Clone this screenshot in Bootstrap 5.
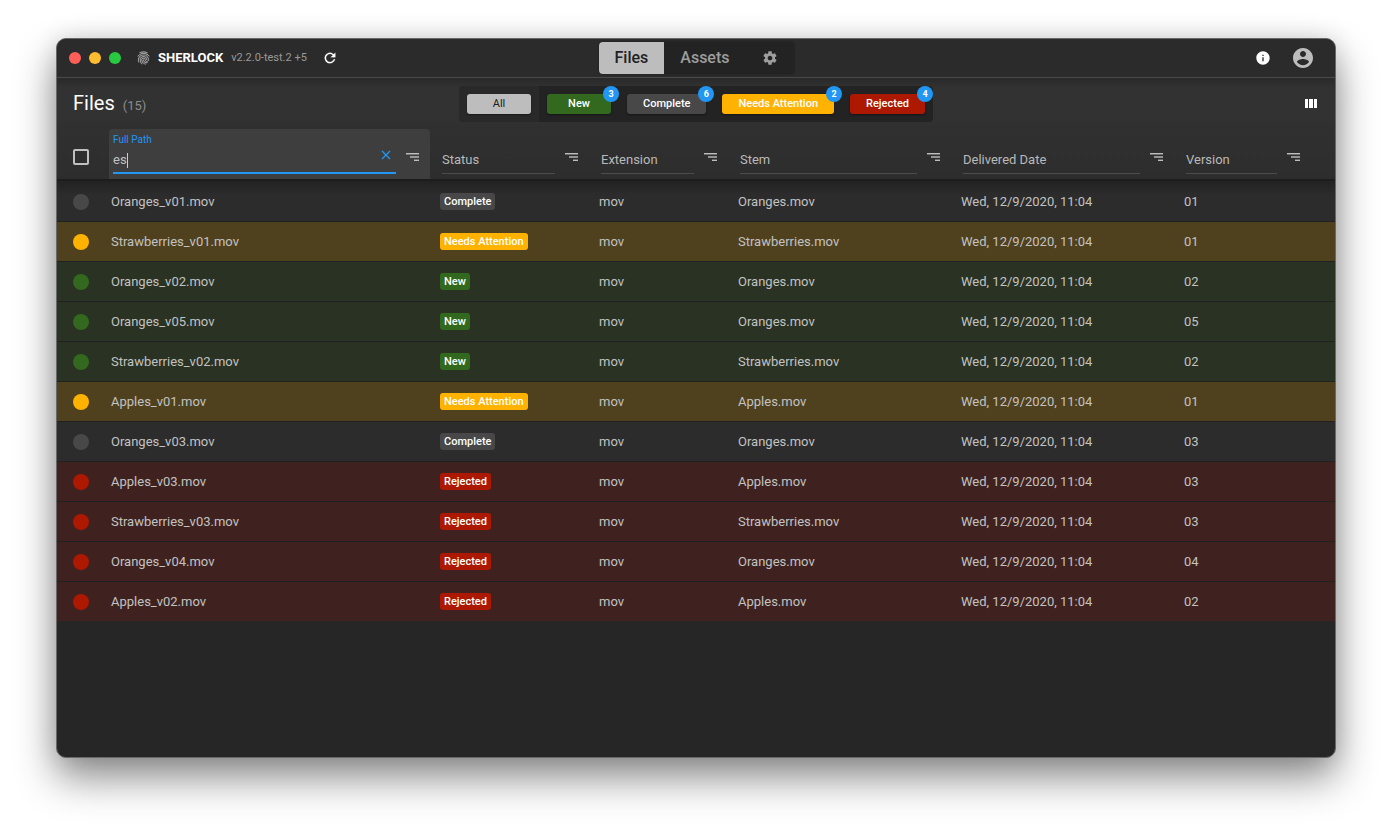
<!DOCTYPE html>
<html lang="en" data-bs-theme="dark">
<head>
<meta charset="utf-8">
<meta name="viewport" content="width=device-width, initial-scale=1">
<title>Sherlock – Files</title>
<link href="https://cdn.jsdelivr.net/npm/bootstrap@5.3.0/dist/css/bootstrap.min.css" rel="stylesheet">
<style>
  body { background: #fff; font-family: Roboto, "Liberation Sans", sans-serif; font-size: 13px; line-height: 20px; padding: 38px 56px 74px; }
  svg { display: block; fill: currentColor; }
  .app-window { background: #262626; color: #fff; border: 1px solid #686868; border-radius: 10px; box-shadow: 0 20px 40px rgba(0,0,0,.45), 0 0 24px rgba(0,0,0,.12); }
  .bar-grid { display: grid; grid-template-columns: 1fr auto 1fr; align-items: center; }
  .titlebar { height: 39px; background: #2b2b2b; border-bottom: 1px solid #4a4a4a; padding: 0 12px; }
  .toolbar { height: 51px; background: linear-gradient(#292929, #323232 10px, #323232 40px, #2f2f2f); padding: 0 16px; }
  .light { width: 12px; height: 12px; border-radius: 50%; }
  .bg-close { background: #ff5f57; } .bg-min { background: #febc2e; } .bg-max { background: #28c840; }
  .brand { font-size: 13px; font-weight: 700; }
  .version { font-size: 11px; font-weight: 400; color: #999; margin-right: 15px; }
  .actions { gap: 20px; }
  .plain { background: none; border: 0; padding: 0; color: inherit; }
  .soft { color: #bdbdbd; }
  .tabs { background: #232323; border-radius: 4px; overflow: hidden; box-shadow: 0 0 2px #1c1c1c; }
  .tabs button { height: 32px; padding: 0 16px; border: 0; background: none; color: #9e9e9e; font-size: 16px; font-weight: 500; }
  .tabs button.active { background: #bdbdbd; color: #212121; }
  .filters { background: #232323; border-radius: 4px; }
  .filters > div { padding: 8px; }
  .filters > div:first-child { background: #292929; border-radius: 4px 0 0 4px; }
  .chip { position: relative; display: block; height: 20px; min-width: 64px; border: 0; border-radius: 3px; padding: 0 16px; font-size: 11px; line-height: 19px; font-weight: 500; color: #fff; box-shadow: 0 1px 2px rgba(0,0,0,.4); }
  .count { position: absolute; top: -8px; right: -8px; width: 16px; height: 16px; border-radius: 50%; background: #2196f3; font-size: 9px; line-height: 16px; font-weight: 700; text-align: center; }
  .s-all { background: #bdbdbd; color: #212121; font-weight: 400; }
  .s-new { background: #33691e; } .s-complete { background: #484848; } .s-attention { background: #ffb300; } .s-rejected { background: #ad1900; }
  .title { font-size: 20px; font-weight: 400; line-height: 24px; }
  .total { font-size: 13px; color: #8c8c8c; }
  .files { table-layout: fixed; width: 100%; border-collapse: separate; border-spacing: 0; }
  .files th { background: linear-gradient(#303030, #2d2d2d); border-bottom: 2px solid #1d1d1d; padding: 0 8px 0 0; height: 52px; font-weight: 400; vertical-align: top; }
  .files td, .files .pick { padding: 0 0 0 2px; }
  .files td { height: 40px; border-bottom: 1px solid #212121; color: #c2c2c2; font-weight: 400; white-space: nowrap; }
  .files td:first-child, .files .pick { padding-left: 16px; }
  .files tr:last-child td { border-bottom: 0; height: 39px; }
  .files tr.complete td { background: #2c2c2c; } .files tr.attention td { background: #50411e; }
  .files tr.new td { background: #293223; } .files tr.rejected td { background: #3f221f; }
  .files tbody tr:first-child td { height: 41px; padding-top: 1px; background: linear-gradient(#222, #2c2c2c 14px); }
  .dot { width: 16px; height: 16px; border-radius: 50%; }
  .tag { display: block; width: fit-content; height: 17px; padding: 0 4px; border-radius: 3px; font-size: 11px; line-height: 17px; font-weight: 500; color: #fff; margin-bottom: 1px; }
  .check { appearance: none; display: block; width: 16px; height: 16px; margin: 20px 0 0; border: 2px solid #c0c0c0; border-radius: 2px; }
  .field { height: 50px; padding-left: 4px; border-radius: 4px 4px 0 0; }
  .field.on { background: #3e3e3e; }
  .entry { flex: 1 1 0; height: 45px; border-bottom: 1px solid #4c4c4c; min-width: 0; padding-top: 21px; }
  .on .entry { border-bottom: 2px solid #2196f3; padding-top: 0; }
  .entry label { font-size: 10px; line-height: 12px; padding-top: 5px; height: 21px; color: #2196f3; font-weight: 400; }
  .entry input { display: block; width: 100%; min-width: 0; height: 20px; padding: 0; border: 0; background: none; color: #c0c0c0; outline: 0; }
  .entry input::placeholder { color: #b9b9b9; opacity: 1; }
  .on .entry input { background: linear-gradient(#ccc, #ccc) 14px 50% / 1px 15px no-repeat; }
  .sort { flex: 0 0 34px; height: 56px; padding-right: 2px; display: flex; align-items: center; justify-content: center; color: #bdbdbd; }
  .blue { color: #2196f3; }
</style>
</head>
<body class="min-vh-100 d-flex flex-column">
<svg class="d-none" aria-hidden="true">
  <symbol id="lines" viewBox="0 0 14 10"><path d="M1 1h13v1H1z"/><path d="M1 2h13v1H1z" opacity=".45"/><path d="M5 4h9v2H5z" opacity=".7"/><path d="M9 7h5v1H9z" opacity=".4"/><path d="M9 8h5v1H9z"/></symbol>
</svg>
<main class="app-window flex-grow-1 overflow-hidden">
  <header class="titlebar bar-grid">
    <div class="d-flex align-items-center">
      <div class="d-flex gap-2 me-3">
        <span class="light bg-close"></span><span class="light bg-min"></span><span class="light bg-max"></span>
      </div>
      <svg class="soft me-2" width="13" height="16" viewBox="2 1 20 22" aria-hidden="true"><path stroke="currentColor" stroke-width=".3" d="M17.81 4.47c-.08 0-.16-.02-.23-.06C15.66 3.42 14 3 12.01 3c-1.98 0-3.86.47-5.57 1.41-.24.13-.54.04-.68-.2-.13-.24-.04-.55.2-.68C7.82 2.52 9.86 2 12.01 2c2.13 0 3.99.47 6.03 1.52.25.13.34.43.21.67-.09.18-.26.28-.44.28zM3.5 9.72c-.1 0-.2-.03-.29-.09-.23-.16-.28-.47-.12-.7.99-1.4 2.25-2.5 3.75-3.27C9.98 4.04 14 4.03 17.15 5.65c1.5.77 2.76 1.86 3.75 3.25.16.22.11.54-.12.7-.23.16-.54.11-.7-.12-.9-1.26-2.04-2.25-3.39-2.94-2.87-1.47-6.54-1.47-9.4.01-1.36.7-2.5 1.7-3.4 2.96-.08.14-.23.21-.39.21zm6.25 12.07c-.13 0-.26-.05-.35-.15-.87-.87-1.34-1.43-2.01-2.64-.69-1.23-1.05-2.73-1.05-4.34 0-2.97 2.54-5.39 5.66-5.39s5.66 2.42 5.66 5.39c0 .28-.22.5-.5.5s-.5-.22-.5-.5c0-2.42-2.09-4.39-4.66-4.39-2.57 0-4.66 1.97-4.66 4.39 0 1.44.32 2.77.93 3.85.64 1.15 1.08 1.64 1.85 2.42.19.2.19.51 0 .71-.11.1-.24.15-.37.15zm7.17-1.85c-1.19 0-2.24-.3-3.1-.89-1.49-1.01-2.38-2.65-2.38-4.39 0-.28.22-.5.5-.5s.5.22.5.5c0 1.41.72 2.74 1.94 3.56.71.48 1.54.71 2.54.71.24 0 .64-.03 1.04-.1.27-.05.53.13.58.41.05.27-.13.53-.41.58-.57.11-1.07.12-1.21.12zM14.91 22c-.04 0-.09-.01-.13-.02-1.59-.44-2.63-1.03-3.72-2.1-1.4-1.39-2.17-3.24-2.17-5.22 0-1.62 1.38-2.94 3.08-2.94 1.7 0 3.08 1.32 3.08 2.94 0 1.07.93 1.94 2.08 1.94s2.08-.87 2.08-1.94c0-3.77-3.25-6.83-7.25-6.83-2.84 0-5.44 1.58-6.61 4.03-.39.81-.59 1.76-.59 2.8 0 .78.07 2.01.67 3.61.1.26-.03.55-.29.64-.26.1-.55-.04-.64-.29-.49-1.31-.73-2.61-.73-3.96 0-1.2.23-2.29.68-3.24 1.33-2.79 4.28-4.6 7.51-4.6 4.55 0 8.25 3.51 8.25 7.83 0 1.62-1.38 2.94-3.08 2.94s-3.08-1.32-3.08-2.94c0-1.07-.93-1.94-2.08-1.94s-2.08.87-2.08 1.94c0 1.71.66 3.31 1.87 4.51.95.94 1.86 1.46 3.27 1.85.27.07.42.35.35.61-.05.23-.26.38-.47.38z"/></svg>
      <span class="brand me-2">SHERLOCK</span>
      <span class="version">v2.2.0-test.2 +5</span>
      <button class="plain" type="button" aria-label="Refresh"><svg width="16" height="16" viewBox="0 0 24 24"><path d="M17.65 6.35C16.2 4.9 14.21 4 12 4c-4.42 0-7.99 3.58-7.99 8s3.57 8 7.99 8c3.73 0 6.84-2.55 7.73-6h-2.08c-.82 2.33-3.04 4-5.65 4-3.31 0-6-2.69-6-6s2.69-6 6-6c1.66 0 3.14.69 4.22 1.78L13 11h7V4l-2.35 2.35z" stroke="currentColor" stroke-width=".3"/></svg></button>
    </div>
    <nav class="tabs d-flex" aria-label="Main">
      <button type="button" class="active">Files</button>
      <button type="button">Assets</button>
      <button type="button" aria-label="Settings"><svg width="16" height="16" viewBox="0 0 24 24"><path d="M19.43 12.98c.04-.32.07-.64.07-.98s-.03-.66-.07-.98l2.11-1.65c.19-.15.24-.42.12-.64l-2-3.46c-.12-.22-.39-.3-.61-.22l-2.49 1c-.52-.4-1.08-.73-1.69-.98l-.38-2.65C14.46 2.18 14.25 2 14 2h-4c-.25 0-.46.18-.49.42l-.38 2.65c-.61.25-1.17.59-1.69.98l-2.49-1c-.23-.09-.49 0-.61.22l-2 3.46c-.13.22-.07.49.12.64l2.11 1.65c-.04.32-.07.65-.07.98s.03.66.07.98l-2.11 1.65c-.19.15-.24.42-.12.64l2 3.46c.12.22.39.3.61.22l2.49-1c.52.4 1.08.73 1.69.98l.38 2.65c.03.24.24.42.49.42h4c.25 0 .46-.18.49-.42l.38-2.65c.61-.25 1.17-.59 1.69-.98l2.49 1c.23.09.49 0 .61-.22l2-3.46c.12-.22.07-.49-.12-.64l-2.11-1.65zM12 15.5c-1.93 0-3.5-1.57-3.5-3.5s1.57-3.5 3.5-3.5 3.5 1.57 3.5 3.5-1.57 3.5-3.5 3.5z"/></svg></button>
    </nav>
    <div class="actions d-flex align-items-center justify-content-end pe-2">
      <button class="plain" type="button" aria-label="Info"><svg width="16" height="16" viewBox="0 0 24 24"><path d="M12 2C6.48 2 2 6.48 2 12s4.48 10 10 10 10-4.48 10-10S17.52 2 12 2zm1 15h-2v-6h2v6zm0-8h-2V7h2v2z"/></svg></button>
      <button class="plain soft" type="button" aria-label="Account"><svg width="24" height="24" viewBox="0 0 24 24"><path d="M12 2C6.48 2 2 6.48 2 12s4.48 10 10 10 10-4.48 10-10S17.52 2 12 2zm0 3c1.66 0 3 1.34 3 3s-1.34 3-3 3-3-1.34-3-3 1.34-3 3-3zm0 14.2c-2.5 0-4.71-1.28-6-3.22.03-1.99 4-3.08 6-3.08 1.99 0 5.97 1.09 6 3.08-1.29 1.94-3.5 3.22-6 3.22z"/></svg></button>
    </div>
  </header>

  <section class="toolbar bar-grid">
    <div class="d-flex align-items-baseline gap-2">
      <h1 class="title m-0">Files</h1><span class="total">(15)</span>
    </div>
    <div class="filters d-flex">
      <div><button type="button" class="chip s-all">All</button></div>
      <div><button type="button" class="chip s-new">New<span class="count">3</span></button></div>
      <div><button type="button" class="chip s-complete">Complete<span class="count">6</span></button></div>
      <div><button type="button" class="chip s-attention">Needs Attention<span class="count">2</span></button></div>
      <div><button type="button" class="chip s-rejected">Rejected<span class="count">4</span></button></div>
    </div>
    <div class="d-flex justify-content-end">
      <button class="plain" type="button" aria-label="Columns"><svg width="16" height="16" viewBox="0 0 16 16"><path d="M2 3h3v9H2zM6 3h4v9H6zM11 3h3v9h-3z"/></svg></button>
    </div>
  </section>

  <table class="files">
    <colgroup>
      <col style="width:52px"><col style="width:329px"><col style="width:159px"><col style="width:139px"><col style="width:223px"><col style="width:223px"><col style="width:153px">
    </colgroup>
    <thead>
      <tr>
        <th class="pick"><input class="check" type="checkbox" aria-label="Select all"></th>
        <th><div class="field on d-flex">
          <div class="entry d-flex">
            <div class="flex-grow-1"><label class="d-block" for="path">Full Path</label><input id="path" type="text" value="es"></div>
            <button class="plain blue pe-1 pt-2" type="button" aria-label="Clear"><svg width="12" height="12" viewBox="0 0 12 12"><path d="M2 2l8 8M10 2l-8 8" fill="none" stroke="currentColor" stroke-width="1.3"/></svg></button>
          </div>
          <button class="plain sort" type="button" aria-label="Sort by full path"><svg width="14" height="10"><use href="#lines"/></svg></button>
        </div></th>
        <th><div class="field d-flex"><div class="entry"><input aria-label="Status" placeholder="Status" type="text"></div><button class="plain sort" type="button" aria-label="Sort by status"><svg width="14" height="10"><use href="#lines"/></svg></button></div></th>
        <th><div class="field d-flex"><div class="entry"><input aria-label="Extension" placeholder="Extension" type="text"></div><button class="plain sort" type="button" aria-label="Sort by extension"><svg width="14" height="10"><use href="#lines"/></svg></button></div></th>
        <th><div class="field d-flex"><div class="entry"><input aria-label="Stem" placeholder="Stem" type="text"></div><button class="plain sort" type="button" aria-label="Sort by stem"><svg width="14" height="10"><use href="#lines"/></svg></button></div></th>
        <th><div class="field d-flex"><div class="entry"><input aria-label="Delivered Date" placeholder="Delivered Date" type="text"></div><button class="plain sort" type="button" aria-label="Sort by delivered date"><svg width="14" height="10"><use href="#lines"/></svg></button></div></th>
        <th class="pe-4"><div class="field d-flex"><div class="entry"><input aria-label="Version" placeholder="Version" type="text"></div><button class="plain sort" type="button" aria-label="Sort by version"><svg width="14" height="10"><use href="#lines"/></svg></button></div></th>
      </tr>
    </thead>
    <tbody>
      <tr class="complete"><td><div class="dot s-complete"></div></td><td>Oranges_v01.mov</td><td><span class="tag s-complete">Complete</span></td><td>mov</td><td>Oranges.mov</td><td>Wed, 12/9/2020, 11:04</td><td>01</td></tr>
      <tr class="attention"><td><div class="dot s-attention"></div></td><td>Strawberries_v01.mov</td><td><span class="tag s-attention">Needs Attention</span></td><td>mov</td><td>Strawberries.mov</td><td>Wed, 12/9/2020, 11:04</td><td>01</td></tr>
      <tr class="new"><td><div class="dot s-new"></div></td><td>Oranges_v02.mov</td><td><span class="tag s-new">New</span></td><td>mov</td><td>Oranges.mov</td><td>Wed, 12/9/2020, 11:04</td><td>02</td></tr>
      <tr class="new"><td><div class="dot s-new"></div></td><td>Oranges_v05.mov</td><td><span class="tag s-new">New</span></td><td>mov</td><td>Oranges.mov</td><td>Wed, 12/9/2020, 11:04</td><td>05</td></tr>
      <tr class="new"><td><div class="dot s-new"></div></td><td>Strawberries_v02.mov</td><td><span class="tag s-new">New</span></td><td>mov</td><td>Strawberries.mov</td><td>Wed, 12/9/2020, 11:04</td><td>02</td></tr>
      <tr class="attention"><td><div class="dot s-attention"></div></td><td>Apples_v01.mov</td><td><span class="tag s-attention">Needs Attention</span></td><td>mov</td><td>Apples.mov</td><td>Wed, 12/9/2020, 11:04</td><td>01</td></tr>
      <tr class="complete"><td><div class="dot s-complete"></div></td><td>Oranges_v03.mov</td><td><span class="tag s-complete">Complete</span></td><td>mov</td><td>Oranges.mov</td><td>Wed, 12/9/2020, 11:04</td><td>03</td></tr>
      <tr class="rejected"><td><div class="dot s-rejected"></div></td><td>Apples_v03.mov</td><td><span class="tag s-rejected">Rejected</span></td><td>mov</td><td>Apples.mov</td><td>Wed, 12/9/2020, 11:04</td><td>03</td></tr>
      <tr class="rejected"><td><div class="dot s-rejected"></div></td><td>Strawberries_v03.mov</td><td><span class="tag s-rejected">Rejected</span></td><td>mov</td><td>Strawberries.mov</td><td>Wed, 12/9/2020, 11:04</td><td>03</td></tr>
      <tr class="rejected"><td><div class="dot s-rejected"></div></td><td>Oranges_v04.mov</td><td><span class="tag s-rejected">Rejected</span></td><td>mov</td><td>Oranges.mov</td><td>Wed, 12/9/2020, 11:04</td><td>04</td></tr>
      <tr class="rejected"><td><div class="dot s-rejected"></div></td><td>Apples_v02.mov</td><td><span class="tag s-rejected">Rejected</span></td><td>mov</td><td>Apples.mov</td><td>Wed, 12/9/2020, 11:04</td><td>02</td></tr>
    </tbody>
  </table>
</main>
<script src="https://cdn.jsdelivr.net/npm/bootstrap@5.3.0/dist/js/bootstrap.bundle.min.js"></script>
</body>
</html>
